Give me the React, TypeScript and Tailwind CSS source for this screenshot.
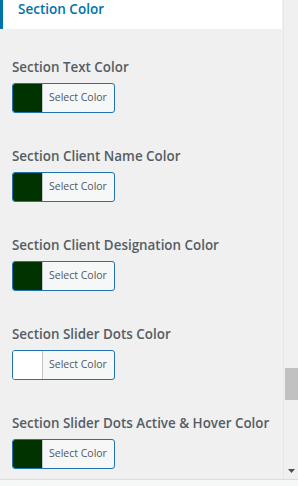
import React from "react";

const items = [
  { label: "Section Text Color", color: "#003300" },
  { label: "Section Client Name Color", color: "#003300" },
  { label: "Section Client Designation Color", color: "#003300" },
  { label: "Section Slider Dots Color", color: "#ffffff" },
  { label: "Section Slider Dots Active & Hover Color", color: "#003300" },
];

export default function App() {
  return (
    <div
      className="w-[298px] h-[486px] bg-[#f0f0f1] flex flex-col overflow-hidden"
      style={{ fontFamily: '"Open Sans", "Noto Sans", Arial, sans-serif' }}
    >
      <div className="flex flex-1 min-h-0">
        <div className="w-[283px] flex flex-col">
          <div className="w-[282px] h-[29px] bg-white border-l-[3px] border-[#0073aa] pl-[15px] pt-[1px] flex items-start">
            <span className="text-[13.5px] leading-[16px] font-semibold text-[#0073aa]">Section Color</span>
          </div>
          <div className="flex flex-col pl-[12px] pt-[28px] gap-[33px]">
            {items.map((it) => (
              <div key={it.label} className="flex flex-col gap-[6px]">
                <div className="text-[13.4px] leading-[20px] font-semibold text-[#555d63] whitespace-nowrap">
                  {it.label}
                </div>
                <button className="w-[103px] h-[30px] flex border border-[#2271b1] rounded-[3px] bg-[#f6f7f7] overflow-hidden">
                  <span
                    className="w-[30px] h-full border-r border-[#c3c4c7]"
                    style={{ backgroundColor: it.color }}
                  />
                  <span className="flex-1 flex items-center justify-start pl-[6px] text-[10.5px] text-[#50575e]">
                    Select Color
                  </span>
                </button>
              </div>
            ))}
          </div>
        </div>
        <div className="w-[15px] relative bg-[#f0f0f0] border-l border-[#e6e6e6]">
          <div className="absolute left-[1px] right-0 top-[368px] h-[32px] bg-[#c1c1c1]" />
          <svg className="absolute left-[4px] top-[469px]" width="7" height="4" viewBox="0 0 7 4">
            <path d="M0 0 H7 L3.5 4 Z" fill="#505050" />
          </svg>
        </div>
      </div>
      <div className="h-[7px] border-t border-[#dcdcde] bg-[#f6f7f7]" />
    </div>
  );
}
